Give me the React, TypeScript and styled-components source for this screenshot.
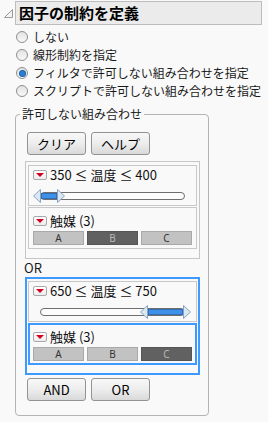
import React from "react";
import styled, { createGlobalStyle } from "styled-components";

const GlobalStyle = createGlobalStyle`
  html, body {
    margin: 0;
    padding: 0;
    background: #f9f9f9;
  }
  body {
    font-family: "Noto Sans CJK JP", "Noto Sans", sans-serif;
    color: #1a1a1a;
  }
`;

const Page = styled.div`
  width: 268px;
  height: 422px;
  padding-top: 1px;
  box-sizing: border-box;
  overflow: hidden;
`;

const TitleRow = styled.div`
  display: flex;
  align-items: flex-start;
  height: 24px;
`;

const Disclosure = styled.svg`
  flex: none;
  width: 9px;
  height: 9px;
  margin: 8px 2px 0 4px;
`;

const TitleBox = styled.div`
  width: 247px;
  height: 24px;
  box-sizing: border-box;
  border: 1px solid #bdbdbd;
  background: #ebebeb;
  padding-left: 3px;
  font-size: 15px;
  line-height: 21px;
  font-weight: bold;
  color: #000;
  white-space: nowrap;
`;

const RadioList = styled.div`
  display: flex;
  flex-direction: column;
  margin: 3px 0 0 16px;
`;

const RadioRow = styled.label`
  display: flex;
  align-items: center;
  gap: 5px;
  height: 18px;
  font-size: 12px;
  line-height: 18px;
  white-space: nowrap;
`;

const RadioDot = styled.span<{ $on?: boolean }>`
  flex: none;
  width: 12px;
  height: 12px;
  box-sizing: border-box;
  border-radius: 50%;
  border: 1px solid #8f8f8f;
  background: linear-gradient(#e2e2e2, #f8f8f8);
  display: flex;
  align-items: center;
  justify-content: center;
  &::after {
    content: "";
    display: ${p => (p.$on ? "block" : "none")};
    width: 5px;
    height: 5px;
    border-radius: 50%;
    background: #2a7fd4;
    box-shadow: 0 0 0 1px #1d5fa6;
  }
`;

const Group = styled.fieldset`
  margin: 7px 0 0 15px;
  width: 194px;
  box-sizing: border-box;
  min-width: 0;
  border: 1px solid #b4b4b4;
  border-radius: 4px;
  padding: 0;
`;

const Legend = styled.legend`
  margin-left: 4px;
  padding: 0 2px;
  font-size: 12px;
  line-height: 14px;
`;

const GroupBody = styled.div`
  display: flex;
  flex-direction: column;
  padding: 11px 0 14px 9px;
`;

const ButtonRow = styled.div<{ $top?: number }>`
  display: flex;
  gap: 5px;
  margin: ${p => p.$top ?? 0}px 0 0 2px;
`;

const Button = styled.button`
  width: 59px;
  height: 23px;
  box-sizing: border-box;
  padding: 0;
  border: 1px solid #939393;
  border-radius: 3px;
  background: linear-gradient(#f8f8f8, #ededed 50%, #d9d9d9);
  font-family: inherit;
  font-size: 13px;
  line-height: 20px;
  color: #000;
`;

const Card = styled.div<{ $sel?: boolean; $top?: number }>`
  width: 175px;
  box-sizing: border-box;
  margin-top: ${p => p.$top ?? 0}px;
  display: flex;
  flex-direction: column;
  gap: 1px;
  border: ${p => (p.$sel ? "2px solid #3d9bff" : "1px solid #c6c6c6")};
  padding: ${p => (p.$sel ? "2px 1px 8px 1px" : "3px 2px 9px 2px")};
`;

const Section = styled.div<{ $sel?: boolean; $kind: "range" | "levels" }>`
  display: flex;
  flex-direction: column;
  border: ${p => (p.$sel ? "2px solid #3d9bff" : "1px solid #c8c8c8")};
  padding: ${p => {
    const d = p.$sel ? 1 : 0;
    return p.$kind === "range"
      ? `${1 - d}px ${4 - d}px ${2 - d}px`
      : `${5 - d}px ${4 - d}px ${3 - d}px`;
  }};
  gap: ${p => (p.$kind === "range" ? 6 : 2)}px;
`;

const ItemHead = styled.div`
  display: flex;
  align-items: center;
  gap: 3px;
  height: 16px;
  font-size: 13px;
  line-height: 16px;
  white-space: nowrap;
  color: #111;
`;

const MenuIcon = styled.span`
  flex: none;
  width: 14px;
  height: 10px;
  box-sizing: border-box;
  border: 1px solid #a8a8a8;
  border-radius: 2px;
  background: linear-gradient(#ffffff, #ececec);
  display: flex;
  align-items: center;
  justify-content: center;
  &::after {
    content: "";
    border-left: 4px solid transparent;
    border-right: 4px solid transparent;
    border-top: 4px solid #d40020;
  }
`;

const SliderBox = styled.div`
  position: relative;
  height: 14px;
`;

const Track = styled.div`
  position: absolute;
  left: 7px;
  right: 7px;
  top: 3px;
  height: 8px;
  box-sizing: border-box;
  border: 1px solid #6e6e6e;
  border-radius: 4px;
  background: #fcfcfc;
`;

const Fill = styled.div`
  position: absolute;
  top: 4px;
  height: 6px;
  box-sizing: border-box;
  border: 1px solid #2f6fb8;
  background: #3f90e8;
`;

const Handle = styled.svg`
  position: absolute;
  top: 0;
  width: 8px;
  height: 14px;
`;

const Levels = styled.div`
  display: flex;
  gap: 3px;
  height: 14px;
`;

const Level = styled.div<{ $on?: boolean }>`
  flex: 1;
  box-sizing: border-box;
  border: 1px solid ${p => (p.$on ? "#555" : "#a9a9a9")};
  background: ${p => (p.$on ? "#616161" : "#c2c2c2")};
  color: ${p => (p.$on ? "#b8b8b8" : "#333")};
  font-family: "Noto Sans", sans-serif;
  font-size: 10px;
  line-height: 13px;
  text-align: center;
`;

const OrLabel = styled.div`
  height: 18px;
  margin-left: -1px;
  font-size: 13px;
  line-height: 18px;
`;

type Range = { text: string; from: number; to: number };

const Slider = ({ from, to }: { from: number; to: number }) => (
  <SliderBox>
    <Track />
    <Fill style={{ left: from, width: to - from }} />
    <Handle style={{ left: from - 8 }} viewBox="0 0 8 14">
      <polygon points="0.5,7 7.5,0.5 7.5,13.5" fill="#dce7f4" stroke="#8ba3c2" />
    </Handle>
    <Handle style={{ left: to }} viewBox="0 0 8 14">
      <polygon points="7.5,7 0.5,0.5 0.5,13.5" fill="#dce7f4" stroke="#8ba3c2" />
    </Handle>
  </SliderBox>
);

const Constraint = ({
  range,
  picked,
  sel,
  top,
}: {
  range: Range;
  picked: string;
  sel?: boolean;
  top?: number;
}) => (
  <Card $sel={sel} $top={top}>
    <Section $kind="range">
      <ItemHead>
        <MenuIcon />
        {range.text}
      </ItemHead>
      <Slider from={range.from} to={range.to} />
    </Section>
    <Section $kind="levels" $sel={sel}>
      <ItemHead>
        <MenuIcon />
        触媒 (3)
      </ItemHead>
      <Levels>
        {["A", "B", "C"].map(l => (
          <Level key={l} $on={l === picked}>
            {l}
          </Level>
        ))}
      </Levels>
    </Section>
  </Card>
);

const options = [
  "しない",
  "線形制約を指定",
  "フィルタで許可しない組み合わせを指定",
  "スクリプトで許可しない組み合わせを指定",
];

export default function App() {
  return (
    <Page>
      <GlobalStyle />
      <TitleRow>
        <Disclosure viewBox="0 0 9 9">
          <polygon points="8.5,0.5 8.5,8.5 0.5,8.5" fill="#f4f4f4" stroke="#9a9a9a" />
        </Disclosure>
        <TitleBox>因子の制約を定義</TitleBox>
      </TitleRow>
      <RadioList>
        {options.map((o, i) => (
          <RadioRow key={o}>
            <RadioDot $on={i === 2} />
            {o}
          </RadioRow>
        ))}
      </RadioList>
      <Group>
        <Legend>許可しない組み合わせ</Legend>
        <GroupBody>
          <ButtonRow>
            <Button>クリア</Button>
            <Button>ヘルプ</Button>
          </ButtonRow>
          <Constraint range={{ text: "350 ≤ 温度 ≤ 400", from: 8, to: 24 }} picked="B" top={6} />
          <OrLabel>OR</OrLabel>
          <Constraint range={{ text: "650 ≤ 温度 ≤ 750", from: 115, to: 150 }} picked="C" sel />
          <ButtonRow $top={3}>
            <Button>AND</Button>
            <Button>OR</Button>
          </ButtonRow>
        </GroupBody>
      </Group>
    </Page>
  );
}
